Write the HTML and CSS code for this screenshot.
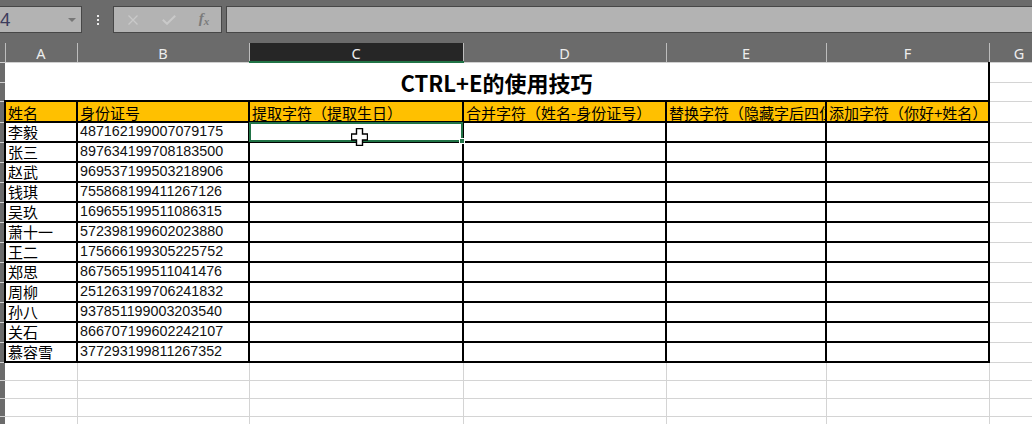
FILE: index.html
```html
<!DOCTYPE html>
<html lang="zh-CN">

<head>
    <meta charset="UTF-8">
    <meta name="viewport" content="width=device-width, initial-scale=1.0">
    <title>CTRL+E的使用技巧</title>
    <link rel="stylesheet" href="styles.css">
</head>

<body>
    <div class="toolbar">
        <div class="namebox">
            <span class="ref">4</span>
            <span class="caret"></span>
        </div>
        <div class="grip"><i></i><i></i><i></i></div>
        <div class="fxbox">
            <span class="btn">
                <svg width="10" height="10" viewBox="0 0 10 10"><path d="M0.5 0.5 L9.5 9.5 M9.5 0.5 L0.5 9.5" stroke="#c9c9c9" stroke-width="1.3" fill="none"/></svg>
            </span>
            <span class="btn">
                <svg width="14" height="10" viewBox="0 0 14 10"><path d="M0.8 4.8 L5 8.8 L13.2 0.8" stroke="#c9c9c9" stroke-width="2" fill="none"/></svg>
            </span>
            <span class="btn fx">f<small>x</small></span>
        </div>
        <div class="formula"></div>
    </div>

    <table class="sheet">
        <colgroup>
            <col style="width: 5px">
            <col style="width: 72px">
            <col style="width: 172px">
            <col style="width: 214px">
            <col style="width: 203px">
            <col style="width: 160px">
            <col style="width: 163px">
            <col style="width: 60px">
        </colgroup>
        <thead>
            <tr class="colhead">
                <th class="corner"></th>
                <th>A</th>
                <th>B</th>
                <th class="sel">C</th>
                <th>D</th>
                <th>E</th>
                <th>F</th>
                <th>G</th>
            </tr>
        </thead>
        <tbody>
            <tr class="r-title1">
                <td class="rh"></td>
                <td class="title" colspan="6" rowspan="2">CTRL+E的使用技巧</td>
                <td></td>
            </tr>
            <tr class="r-title2">
                <td class="rh"></td>
                <td></td>
            </tr>
            <tr class="r-head">
                <td class="rh"></td>
                <td class="hd">姓名</td>
                <td class="hd">身份证号</td>
                <td class="hd">提取字符（提取生日）</td>
                <td class="hd">合并字符（姓名-身份证号）</td>
                <td class="hd">替换字符（隐藏字后四位）</td>
                <td class="hd">添加字符（你好+姓名）</td>
                <td></td>
            </tr>
            <tr class="r-data">
                <td class="rh"></td>
                <td class="dt">李毅</td>
                <td class="dt id">487162199007079175</td>
                <td class="dt active">
                    <div class="selbox"><span class="handle"></span></div>
                    <svg class="cursor" width="17" height="18" viewBox="0 0 17 18"><path d="M5.5 0.5 H11.5 V6 H16.5 V12 H11.5 V17.5 H5.5 V12 H0.5 V6 H5.5 Z" fill="#fff" stroke="#000" stroke-width="1.4"/></svg>
                </td>
                <td class="dt"></td>
                <td class="dt"></td>
                <td class="dt"></td>
                <td></td>
            </tr>
            <tr class="r-data">
                <td class="rh"></td>
                <td class="dt">张三</td>
                <td class="dt id">897634199708183500</td>
                <td class="dt"></td><td class="dt"></td><td class="dt"></td><td class="dt"></td>
                <td></td>
            </tr>
            <tr class="r-data">
                <td class="rh"></td>
                <td class="dt">赵武</td>
                <td class="dt id">969537199503218906</td>
                <td class="dt"></td><td class="dt"></td><td class="dt"></td><td class="dt"></td>
                <td></td>
            </tr>
            <tr class="r-data">
                <td class="rh"></td>
                <td class="dt">钱琪</td>
                <td class="dt id">755868199411267126</td>
                <td class="dt"></td><td class="dt"></td><td class="dt"></td><td class="dt"></td>
                <td></td>
            </tr>
            <tr class="r-data">
                <td class="rh"></td>
                <td class="dt">吴玖</td>
                <td class="dt id">169655199511086315</td>
                <td class="dt"></td><td class="dt"></td><td class="dt"></td><td class="dt"></td>
                <td></td>
            </tr>
            <tr class="r-data">
                <td class="rh"></td>
                <td class="dt">萧十一</td>
                <td class="dt id">572398199602023880</td>
                <td class="dt"></td><td class="dt"></td><td class="dt"></td><td class="dt"></td>
                <td></td>
            </tr>
            <tr class="r-data">
                <td class="rh"></td>
                <td class="dt">王二</td>
                <td class="dt id">175666199305225752</td>
                <td class="dt"></td><td class="dt"></td><td class="dt"></td><td class="dt"></td>
                <td></td>
            </tr>
            <tr class="r-data">
                <td class="rh"></td>
                <td class="dt">郑思</td>
                <td class="dt id">867565199511041476</td>
                <td class="dt"></td><td class="dt"></td><td class="dt"></td><td class="dt"></td>
                <td></td>
            </tr>
            <tr class="r-data">
                <td class="rh"></td>
                <td class="dt">周柳</td>
                <td class="dt id">251263199706241832</td>
                <td class="dt"></td><td class="dt"></td><td class="dt"></td><td class="dt"></td>
                <td></td>
            </tr>
            <tr class="r-data">
                <td class="rh"></td>
                <td class="dt">孙八</td>
                <td class="dt id">937851199003203540</td>
                <td class="dt"></td><td class="dt"></td><td class="dt"></td><td class="dt"></td>
                <td></td>
            </tr>
            <tr class="r-data">
                <td class="rh"></td>
                <td class="dt">关石</td>
                <td class="dt id">866707199602242107</td>
                <td class="dt"></td><td class="dt"></td><td class="dt"></td><td class="dt"></td>
                <td></td>
            </tr>
            <tr class="r-data">
                <td class="rh"></td>
                <td class="dt">慕容雪</td>
                <td class="dt id">377293199811267352</td>
                <td class="dt"></td><td class="dt"></td><td class="dt"></td><td class="dt"></td>
                <td></td>
            </tr>
            <tr class="r-empty">
                <td class="rh"></td><td></td><td></td><td></td><td></td><td></td><td></td><td></td>
            </tr>
            <tr class="r-empty">
                <td class="rh"></td><td></td><td></td><td></td><td></td><td></td><td></td><td></td>
            </tr>
            <tr class="r-empty">
                <td class="rh"></td><td></td><td></td><td></td><td></td><td></td><td></td><td></td>
            </tr>
            <tr class="r-empty">
                <td class="rh"></td><td></td><td></td><td></td><td></td><td></td><td></td><td></td>
            </tr>
        </tbody>
    </table>
</body>

</html>
```

FILE: styles.css
```css
* {
    box-sizing: border-box;
}

body {
    margin: 0;
    padding: 0;
    background-color: #6b6b6b;
    height: 100vh;
    overflow: hidden;
    font-family: "Noto Sans CJK SC", "Liberation Sans", sans-serif;
}

/* barra de fórmulas */
.toolbar {
    display: flex;
    height: 33px;
    padding-top: 6px;
    margin-bottom: 10px;
}

.namebox {
    width: 84px;
    margin-left: -2px;
    background-color: #b3b3b3;
    border: 1px solid #474747;
    display: flex;
    align-items: center;
    justify-content: space-between;
}

.namebox .ref {
    font-family: "Noto Sans", sans-serif;
    font-size: 18px;
    color: #3c3c5c;
    margin-left: 1px;
    margin-top: -2px;
}

.namebox .caret {
    width: 0;
    height: 0;
    border-left: 4px solid transparent;
    border-right: 4px solid transparent;
    border-top: 4px solid #777;
    margin-right: 5px;
}

.grip {
    width: 31px;
    display: flex;
    flex-direction: column;
    align-items: center;
    justify-content: center;
    gap: 2px;
}

.grip i {
    display: block;
    width: 2px;
    height: 2px;
    background-color: #ececec;
}

.fxbox {
    width: 109px;
    background-color: #b3b3b3;
    border: 1px solid #474747;
    display: grid;
    grid-template-columns: 36px 36px 1fr;
    align-items: center;
    padding-left: 1px;
}

.fxbox .btn {
    display: flex;
    justify-content: center;
    align-items: center;
}

.fxbox .fx {
    font-family: "Liberation Serif", serif;
    font-style: italic;
    font-weight: bold;
    font-size: 15px;
    color: #7b7b7b;
    margin-top: -2px;
}

.fxbox .fx small {
    font-size: 11px;
    margin-top: 4px;
}

.formula {
    flex: 1;
    margin-left: 4px;
    margin-right: -2px;
    background-color: #b3b3b3;
    border: 1px solid #474747;
}

/* planilha */
.sheet {
    border-collapse: collapse;
    table-layout: fixed;
    width: 1049px;
}

.sheet td {
    background-color: #fff;
    border-right: 1px solid #d4d4d4;
    border-bottom: 1px solid #d4d4d4;
    padding: 0 2px;
    white-space: nowrap;
    overflow: hidden;
    font-size: 15px;
    line-height: 17px;
    color: #000;
}

.colhead th {
    height: 19px;
    padding: 1px 0 0;
    background-color: #6b6b6b;
    border-right: 1px solid #bdbdbd;
    border-bottom: 1px solid #d0d0d0;
    font-family: "Noto Sans", sans-serif;
    font-weight: normal;
    font-size: 14.5px;
    line-height: 16px;
    color: #ededed;
    text-align: center;
}

.colhead th.corner {
    border-right: 1px solid #bdbdbd;
}

.colhead th.sel {
    background-color: #262626;
    border-bottom: 2px solid #217346;
}

.sheet td.rh {
    background-color: #6b6b6b;
    border-right: none;
    border-bottom: 1px solid #cfcfcf;
    padding: 0;
}

.r-title1 td {
    height: 20px;
}

.r-title2 td {
    height: 19px;
}

.sheet td.title {
    border-right: 2px solid #000;
    text-align: center;
    font-weight: bold;
    font-size: 22px;
    line-height: 26px;
    padding-top: 1px;
}

.r-head td {
    height: 21px;
}

.sheet td.hd {
    background-color: #ffc000;
    border: 2px solid #000;
    padding-top: 1px;
}

.r-data td {
    height: 19px;
}

.sheet td.dt {
    border: 2px solid #000;
    padding-bottom: 1px;
}

.sheet td.id {
    font-family: "Liberation Sans", sans-serif;
    font-size: 14.3px;
    color: #111;
}

.r-empty td {
    height: 18px;
}

.sheet td.active {
    position: relative;
    overflow: visible;
}

.selbox {
    position: absolute;
    top: -1px;
    left: -1px;
    right: -1px;
    bottom: -1px;
    border: 2px solid #217346;
    z-index: 5;
}

.selbox .handle {
    position: absolute;
    right: -4px;
    bottom: -4px;
    width: 6px;
    height: 6px;
    background-color: #217346;
    border: 1px solid #fff;
}

.cursor {
    position: absolute;
    left: 101px;
    top: 5px;
    z-index: 6;
}
```
